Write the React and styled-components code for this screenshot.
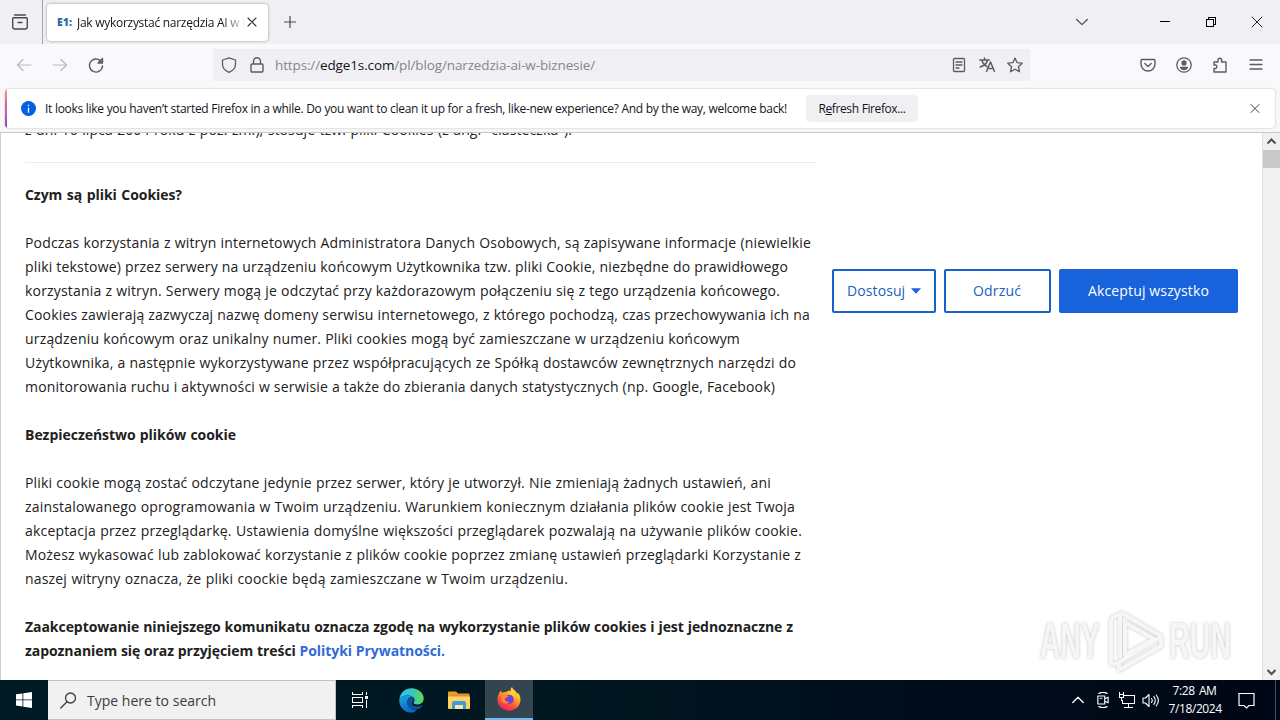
import React from 'react';
import styled, { createGlobalStyle } from 'styled-components';

const Global = createGlobalStyle`
  * { box-sizing: border-box; }
  body { margin: 0; overflow: hidden; font-family: "Open Sans", "Noto Sans", sans-serif; }
  svg { display: block; flex: none; }
`;

const Screen = styled.div`
  width: 1280px; height: 720px; display: flex; flex-direction: column;
  background: #fff; overflow: hidden;
`;

/* A single line of text set to an exact measure */
const Line = styled.div`
  width: ${p => p.$w}px; flex: none; white-space: nowrap;
  text-align: justify; text-align-last: justify;
  font-size: ${p => p.$size || 12}px; letter-spacing: ${p => p.$ls || 0}px;
  font-weight: ${p => p.$weight || 400};
  color: ${p => p.$color || 'inherit'};
  line-height: ${p => p.$lh || 20}px;
`;
const Gap = styled.div`flex: ${p => (p.$w ? `0 0 ${p.$w}px` : '1')};`;

const TabBar = styled.header`
  height: 44px; flex: none; display: flex; align-items: center; background: #f0f0f4; color: #4a4a52;
`;
const FirefoxView = styled.div`
  width: 43px; height: 44px; padding-left: 12px; display: flex; align-items: center;
  border-right: 1px solid #a5a5ab;
`;
const Tab = styled.div`
  width: 221px; height: 37px; margin-left: 4px; border-radius: 4px; background: #fff;
  box-shadow: 0 0 3px rgba(0,0,0,.38); padding-left: 10px; display: flex; align-items: center;
`;
const Favicon = styled.span`
  width: 20px; font: 800 10.5px/12px "Open Sans", sans-serif; color: #2b6aa8; letter-spacing: 0;
`;
const TabTitle = styled.div`
  width: 167px; overflow: hidden; color: #15141a; padding-top: 2px;
  mask-image: linear-gradient(90deg, #000 145px, transparent 168px);
`;

const NavBar = styled.div`
  height: 44px; flex: none; display: flex; align-items: center; background: #f9f9fb; color: #5b5b66;
  padding: 0 16px 3px;
`;
const UrlBar = styled.div`
  width: 817px; height: 32px; background: #f0f0f4; display: flex; align-items: center; padding: 0 7px 0 8px;
  b { color: #15141a; font-weight: 400; }
`;

const NoticeArea = styled.div`
  height: 45px; flex: none; background: #f7f7f8; padding: 1px 5px 5px 5px; border-bottom: 1px solid #c8c8ca;
`;
const Notice = styled.div`
  height: 39px; background: #fff; border-radius: 4px; display: flex; align-items: center;
  box-shadow: 0 0 2px rgba(0,0,0,.28); overflow: hidden; color: #15141a; padding-right: 15px;
`;
const Stripe = styled.div`
  width: 2px; height: 39px; background: linear-gradient(#ffa266, #e45fa0 35%, #b45fc0 65%, #7542c5);
`;
const RefreshButton = styled.div`
  width: 112px; height: 27px; border-radius: 4px; background: #f0f0f2; margin-left: 19px;
  display: flex; align-items: center; justify-content: center;
`;

const Viewport = styled.main`
  height: 547px; flex: none; display: flex; overflow: hidden; border-left: 1px solid #cfcfd0; background: #fff;
`;
const Article = styled.div`
  width: 791px; margin: -15px 0 0 24px; flex: none; color: #212121;
`;
const Rule = styled.hr`
  border: 0; height: 1px; background: #ececec; margin: 20px 0;
`;
const Spacer = styled.div`height: 24px;`;
const PolicyLink = styled.span`color: #2f6bd8;`;
const Actions = styled.div`
  display: flex; gap: 8px; margin: 136px 0 0 16px; height: 44px; flex: none;
`;
const ActionButton = styled.div`
  width: ${p => p.$w}px; height: 44px; border: 2px solid ${p => (p.$primary ? '#1863dc' : '#1863c8')}; border-radius: 2px;
  background: ${p => (p.$primary ? '#1863dc' : '#fff')}; color: ${p => (p.$primary ? '#fff' : '#2060bf')};
  display: flex; align-items: center; justify-content: center; gap: 6px;
`;
const Scrollbar = styled.div`
  width: 18px; background: #f0f0f0; display: flex; flex-direction: column; align-items: center;
  border-left: 1px solid #e0e0e0; padding: 4px 0;
`;
const Thumb = styled.div`width: 17px; height: 18px; background: #c9c9c9; margin-top: 4px;`;

const Taskbar = styled.footer`
  height: 40px; flex: none; display: flex; align-items: center; color: #fff;
  background: linear-gradient(90deg, #001a24 0, #001720 42%, #000d1b 70%, #000716 100%);
`;
const TaskButton = styled.div`
  width: ${p => p.$w || 48}px; height: 40px; display: flex; align-items: center; justify-content: center;
  background: ${p => (p.$active ? '#33454e' : 'transparent')};
  border-bottom: ${p => (p.$active ? '2px solid #76b9ed' : '0')};
`;
const Search = styled.div`
  width: 288px; height: 40px; background: #f1f1f1; border: 1px solid #c3c3c3; border-left: 0;
  display: flex; align-items: center; padding: 1px 0 0 12px; color: #3c3c3c;
`;
const Clock = styled.div`
  width: 53px; margin-left: 9px; display: flex; flex-direction: column; align-items: center;
`;
const ShowDesktop = styled.div`width: 5px; height: 40px; border-left: 1px solid #46505c;`;

const Watermark = styled.div`
  position: absolute; left: 1038px; top: 608px; width: 194px; height: 66px;
  display: flex; align-items: center; justify-content: space-between;
  filter: drop-shadow(0 0 1.5px rgba(0,0,0,.24));
`;
const Wordmark = styled.span`
  width: ${p => p.$w}px; height: 44px; display: flex; justify-content: center; align-items: center;
  font: 700 50px/44px "Liberation Sans", sans-serif; color: #f6f6f6;
  > i { font-style: normal; transform: scaleX(${p => p.$sx}); }
`;

const Icon = ({ s = 16, vb = 16, w = 1.3, children, ...rest }) => (
  <svg width={s} height={s} viewBox={`0 0 ${vb} ${vb}`} fill="none" stroke="currentColor"
    strokeWidth={w} strokeLinecap="round" strokeLinejoin="round" {...rest}>{children}</svg>
);

const intro = [
  ['Podczas korzystania z witryn internetowych Administratora Danych Osobowych, są zapisywane informacje (niewielkie', 786],
  ['pliki tekstowe) przez serwery na urządzeniu końcowym Użytkownika tzw. pliki Cookie, niezbędne do prawidłowego', 763],
  ['korzystania z witryn. Serwery mogą je odczytać przy każdorazowym połączeniu się z tego urządzenia końcowego.', 755],
  ['Cookies zawierają zazwyczaj nazwę domeny serwisu internetowego, z którego pochodzą, czas przechowywania ich na', 785],
  ['urządzeniu końcowym oraz unikalny numer. Pliki cookies mogą być zamieszczane w urządzeniu końcowym', 715],
  ['Użytkownika, a następnie wykorzystywane przez współpracujących ze Spółką dostawców zewnętrznych narzędzi do', 771],
  ['monitorowania ruchu i aktywności w serwisie a także do zbierania danych statystycznych (np. Google, Facebook)', 750],
];
const safety = [
  ['Pliki cookie mogą zostać odczytane jedynie przez serwer, który je utworzył. Nie zmieniają żadnych ustawień, ani', 746],
  ['zainstalowanego oprogramowania w Twoim urządzeniu. Warunkiem koniecznym działania plików cookie jest Twoja', 770],
  ['akceptacja przez przeglądarkę. Ustawienia domyślne większości przeglądarek pozwalają na używanie plików cookie.', 777],
  ['Możesz wykasować lub zablokować korzystanie z plików cookie poprzez zmianę ustawień przeglądarki Korzystanie z', 776],
  ['naszej witryny oznacza, że pliki coockie będą zamieszczane w Twoim urządzeniu.', 543],
];
const Body = ({ rows }) => rows.map(([t, w]) => <Line key={t} $w={w} $size={14} $ls={0.18} $lh={24}>{t}</Line>);
const Bold = ({ w, ls = -0.03, children }) => <Line $w={w} $size={14} $ls={ls} $lh={24} $weight={700}>{children}</Line>;

export default function App() {
  return (
    <Screen>
      <Global />
      <TabBar>
        <FirefoxView>
          <Icon s={16} w={1.4}><path d="M2.5 1h11M1.500 3.800h13a1 1 0 0 1 .8 1V13a2 2 0 0 1-2 2H2.700a2 2 0 0 1-2-2V4.800a1 1 0 0 1 .8-1zM6 8.500h4" /></Icon>
        </FirefoxView>
        <Tab>
          <Favicon>E1:</Favicon>
          <TabTitle><Line $w={166} $size={12} $ls={-0.28}>Jak wykorzystać narzędzia AI w b</Line></TabTitle>
          <Gap $w={3} />
          <Icon s={10} vb={10} w={1.1} color="#333"><path d="M1 1l8 8M9 1L1 9" /></Icon>
        </Tab>
        <Gap $w={16} />
        <Icon s={12} vb={12} w={1.2}><path d="M6 .5v11M.5 6h11" /></Icon>
        <Gap />
        <Icon s={12} vb={12} w={1.2}><path d="M.7 3.500L6 8.600l5.300-5.100" /></Icon>
        <Gap $w={71} />
        <Icon s={12} vb={12} w={1} color="#000" shapeRendering="crispEdges"><path d="M1 5.500h10" /></Icon>
        <Gap $w={34} />
        <Icon s={12} vb={12} w={1} color="#000" shapeRendering="crispEdges"><path d="M1.500 3.500h7v7h-7zM3.500 3.500v-2h7v7h-2" /></Icon>
        <Gap $w={34} />
        <Icon s={12} vb={12} w={1} color="#222"><path d="M1 1l10 10M11 1L1 11" /></Icon>
        <Gap $w={17} />
      </TabBar>

      <NavBar>
        <Icon color="#b8b8bf" w={1.2}><path d="M15 8H1.500M7 2.500L1.500 8 7 13.500" /></Icon>
        <Gap $w={20} />
        <Icon color="#b8b8bf" w={1.2}><path d="M1 8h13.500M9 2.500L14.500 8 9 13.500" /></Icon>
        <Gap $w={20} />
        <Icon w={1.4}><path d="M14 6A6.500 6.500 0 1 0 14.500 9M14.500 1.500V6H10z" /></Icon>
        <Gap $w={109} />
        <UrlBar>
          <Icon w={1.3}><path d="M8 .8L14.500 3v4.200c0 3.600-2.500 6.500-6.500 8.100-4-1.600-6.500-4.500-6.500-8.100V3z" /></Icon>
          <Gap $w={12} />
          <Icon w={1.4}><path d="M3 7h10a1 1 0 0 1 1 1v6a1 1 0 0 1-1 1H3a1 1 0 0 1-1-1V8a1 1 0 0 1 1-1zM4.500 7V4.200a3.500 3.500 0 0 1 7 0V7" /></Icon>
          <Gap $w={10} />
          <Line $w={320} $size={13.5} $ls={-0.13} $color="#85858c">https://<b>edge1s.com</b>/pl/blog/narzedzia-ai-w-biznesie/</Line>
          <Gap />
          <Icon w={1.3}><path d="M3.500 1.500h9a1 1 0 0 1 1 1v11a1 1 0 0 1-1 1h-9a1 1 0 0 1-1-1v-11a1 1 0 0 1 1-1zM5 5h6M5 8h6M5 11h3" /></Icon>
          <Gap $w={12} />
          <Icon w={1.5}><path d="M.8 3h9.400M5.500 1v2M8.500 3C7.800 6.500 4.500 9 1.200 10M2.800 3c.6 3 2.600 5 5 6.500M7.500 14.500L11.500 5l4 9.500M9 11.500h5" /></Icon>
          <Gap $w={12} />
          <Icon w={1.3}><path d="M8 1l2.100 4.700 5.100.5-3.800 3.500 1.100 5.100L8 12.200l-4.500 2.600 1.100-5.100L.8 6.200l5.100-.5z" /></Icon>
        </UrlBar>
        <Gap />
        <Icon w={1.4}><path d="M2 2.500h12a1 1 0 0 1 1 1V7A7 7 0 0 1 1 7V3.500a1 1 0 0 1 1-1zM4.800 6.500L8 9.500l3.200-3" /></Icon>
        <Gap $w={20} />
        <Icon w={1.3}><circle cx="8" cy="8" r="7.200" /><circle cx="8" cy="6" r="2" fill="currentColor" /><path d="M4.500 10.500h7c-.5 1.300-1.900 2-3.500 2s-3-.7-3.500-2z" fill="currentColor" /></Icon>
        <Gap $w={20} />
        <Icon w={1.4}><path d="M2 5h4V3a1.800 1.800 0 0 1 3.600 0v2H14v10H2v-3.500h1.500a1.800 1.800 0 0 0 0-3.500H2z" /></Icon>
        <Gap $w={20} />
        <Icon w={1.3}><path d="M2 3h12M2 7.500h12M2 12h12" /></Icon>
      </NavBar>

      <NoticeArea>
        <Notice>
          <Stripe />
          <Gap $w={14} />
          <svg width="16" height="16" viewBox="0 0 16 16"><circle cx="7.500" cy="7.500" r="7.500" fill="#0560df" /><path d="M7.500 6.700v5M7.500 3.700v1.500" stroke="#fff" strokeWidth="1.300" /></svg>
          <Gap $w={8} />
          <Line $w={742} $size={12} $ls={-0.29}>It looks like you haven’t started Firefox in a while. Do you want to clean it up for a fresh, like-new experience? And by the way, welcome back!</Line>
          <RefreshButton><Line $w={87} $size={12} $ls={-0.4}>R<u>e</u>fresh Firefox...</Line></RefreshButton>
          <Gap />
          <Icon s={10} vb={10} w={1} color="#444"><path d="M1 .5l8 8M9 .5l-8 8" /></Icon>
        </Notice>
      </NoticeArea>

      <Viewport>
        <Article>
          <Line $w={547} $size={14} $ls={0.1} $lh={24}>z dn. 16 lipca 2004 roku z póź. zm.), stosuje tzw. pliki Cookies (z ang. "ciasteczka").</Line>
          <Rule />
          <Bold w={157} ls={-0.05}>Czym są pliki Cookies?</Bold>
          <Spacer />
          <Body rows={intro} />
          <Spacer />
          <Bold w={211}>Bezpieczeństwo plików cookie</Bold>
          <Spacer />
          <Body rows={safety} />
          <Spacer />
          <Bold w={768} ls={-0.05}>Zaakceptowanie niniejszego komunikatu oznacza zgodę na wykorzystanie plików cookies i jest jednoznaczne z</Bold>
          <Bold w={420} ls={-0.06}>zapoznaniem się oraz przyjęciem treści <PolicyLink>Polityki Prywatności.</PolicyLink></Bold>
        </Article>
        <Actions>
          <ActionButton $w={104}>
            <Line $w={58} $size={14} $ls={0.1}>Dostosuj</Line>
            <svg width="10" height="6" viewBox="0 0 11 6"><path d="M0 0h11L5.500 6z" fill="#1863dc" /></svg>
          </ActionButton>
          <ActionButton $w={107}><Line $w={49} $size={14} $ls={0.2}>Odrzuć</Line></ActionButton>
          <ActionButton $w={179} $primary><Line $w={121} $size={14} $ls={0.14}>Akceptuj wszystko</Line></ActionButton>
        </Actions>
        <Gap />
        <Scrollbar>
          <Icon s={9} vb={9} w={2} color="#505050" strokeLinecap="butt" strokeLinejoin="miter"><path d="M.5 6.500l4-4 4 4" /></Icon>
          <Thumb />
          <Gap />
          <Icon s={9} vb={9} w={2} color="#505050" strokeLinecap="butt" strokeLinejoin="miter"><path d="M.5 3l4 4 4-4" /></Icon>
        </Scrollbar>
      </Viewport>

      <Taskbar>
        <TaskButton>
          <svg width="16" height="16" viewBox="0 0 16 16" fill="#fff"><path d="M0 2.300l6.500-.9v6.100H0zM7.300 1.300L16 0v7.500H7.300zM0 8.300h6.500v6.200L0 13.600zM7.300 8.300H16V16l-8.700-1.200z" /></svg>
        </TaskButton>
        <Search>
          <Icon s={17} vb={17} w={1.3}><circle cx="10.500" cy="6" r="5" /><path d="M7 9.800L.8 16" /></Icon>
          <Gap $w={10} />
          <Line $w={129} $size={14} $ls={-0.02}>Type here to search</Line>
        </Search>
        <TaskButton>
          <svg width="17" height="16" viewBox="0 0 17 16" fill="none" stroke="#fff" shapeRendering="crispEdges"><path d="M.5 0v2.500h10V0M.5 5.500h10v5H.5zM.5 16v-2.500h10V16M14.500 0v3M14.500 8v8" /><path d="M13 4h3v3h-3z" fill="#fff" stroke="none" /></svg>
        </TaskButton>
        <TaskButton $w={54}>
          <svg width="25" height="25" viewBox="0 0 24 24">
            <defs>
              <linearGradient id="ea" x1="0" x2="1"><stop stopColor="#2fc1ee" /><stop offset=".55" stopColor="#35c7bd" /><stop offset="1" stopColor="#66d84e" /></linearGradient>
              <linearGradient id="eb" x1="0" y1="0" x2=".5" y2="1"><stop stopColor="#1ba7e6" /><stop offset="1" stopColor="#0868c0" /></linearGradient>
            </defs>
            <path d="M.3 11C1 4.500 6 .3 12 .3c7 0 11.700 4.900 11.700 9.700 0 3.500-2.700 5.800-6 5.800-2.700 0-3.900-1-3.700-1.700.2-.6.900-1 .9-2.500 0-2-2.400-4.400-6.400-4.400C4.500 7.200 1.300 8.800.3 11z" fill="url(#ea)" />
            <path d="M.3 11c1-2.200 4.200-3.800 8.200-3.800 1.500 0 2.800.4 3.900 1C9.500 8.800 8 11.300 8 14c0 4.500 4.500 7.500 9 7.200-1.400 1.500-3.500 2.500-5.500 2.500C5 23.700-.3 18 .3 11z" fill="url(#eb)" />
            <path d="M12.300 8.300C9.500 8.800 8 11.300 8 14c0 5 5 8 10 6.500 1.700-.7 3.200-1.900 4.200-3.200.3-.5-.1-.8-.6-.6-6 2.800-10.800-.8-8.700-3 1.400-1.500 1.500-3.400-.6-5.400z" fill="#124f9c" />
          </svg>
        </TaskButton>
        <TaskButton $w={42}>
          <svg width="22" height="19" viewBox="0 0 22 19">
            <path d="M0 1.500Q0 .5 1 .5h7l2 2h10.500q1 0 1 1V8H0z" fill="#e8a317" />
            <path d="M3 3h17v3H3z" fill="#e98c3a" />
            <path d="M0 5.500h22V17q0 1-1 1H1q-1 0-1-1z" fill="#fcd462" />
            <path d="M4 18v-6q0-2 2-2h10q2 0 2 2v6h-3v-4H7v4z" fill="#3f9bd8" /><path d="M7 14h8v4H7z" fill="#fbe6a1" />
          </svg>
        </TaskButton>
        <Gap $w={5} />
        <TaskButton $active>
          <svg width="24" height="24" viewBox="0 0 24 24">
            <defs>
              <linearGradient id="fa" x1=".8" y1="0" x2=".25" y2="1"><stop stopColor="#fff044" /><stop offset=".35" stopColor="#ffb42a" /><stop offset=".65" stopColor="#ff5a36" /><stop offset="1" stopColor="#ec1670" /></linearGradient>
            </defs>
            <path d="M4 3.500c.2 1.200.8 2 1.600 2.300C6.600 5 8 4.800 9 5.200 10 3.800 12 3.200 14 4c-.6-1.300-.5-2.700 1-4 .6 2.200 2.500 3 4 4.800.6.7.8 1.300 1 2 .5-.3.600-.8.600-1.300C22.500 7.300 23.500 9.800 23.500 12.500 23.500 19 18.500 23.700 12 23.700S.5 19 .5 12.500C.5 9 1.700 6 4 3.500z" fill="url(#fa)" />
            <circle cx="12.200" cy="12.300" r="4.600" fill="#7541d8" />
            <path d="M4.500 7.500C7 7 9 7.200 11.500 9.500c-1 1.400-3.500 1-3.800 2.600-.1 2 2 3 4.800 2.700-1.400 2-5 2.400-7 .2-1.600-1.800-2-4.500-1-7.500z" fill="#ff8a24" />
            <path d="M13 4.500c3 1 5.500 4 5 8-.2-2.200-1.500-4-3.500-4.500-1.200-.6-1.800-2-1.500-3.500z" fill="#ffd338" />
          </svg>
        </TaskButton>
        <Gap />
        <Icon s={12} vb={12} w={1.3}><path d="M.8 8.500L6 3.300l5.200 5.200" /></Icon>
        <Gap $w={11} />
        <Icon s={16} vb={14} w={1}><path d="M2.500 3.500h6v7h-6zM8.500 6l3-1.500v5l-3-1.500M3.500 1.200Q7-.6 10.500 1.200M3.500 12.800Q7 14.600 10.500 12.800M4.500 5.500h1.500" /></Icon>
        <Gap $w={7} />
        <Icon s={17} vb={17} w={1.1} shapeRendering="crispEdges" strokeLinejoin="miter"><path d="M6.500 3.500h10v8h-12v-3M10.500 12v3M6.500 15.500h8M1.500 2.500h4v3h-4zM3.500 5.500v3M1.500 1v1M5.500 1v1" /></Icon>
        <Gap $w={7} />
        <Icon s={17} vb={17} w={1.1}><path d="M1 6h2.500L7 2.500v12L3.500 11H1zM9.500 6.500q1.500 2 0 4M11.800 4.700q3 3.800 0 7.600M14.200 3q4.300 5.500 0 11" /></Icon>
        <Clock>
          <Line $w={44} $size={12} $lh={18} $ls={-0.4}>7:28 AM</Line>
          <Line $w={52} $size={12} $lh={18} $ls={-0.4}>7/18/2024</Line>
        </Clock>
        <Gap $w={17} />
        <Icon s={17} vb={17} w={1.2} strokeLinejoin="miter"><path d="M1 1.500h15v12h-5L8.500 16 6 13.500H1z" /></Icon>
        <Gap $w={20} />
        <ShowDesktop />
      </Taskbar>

      <Watermark>
        <Wordmark $w={64} $sx={0.57}><i>ANY</i></Wordmark>
        <svg width="58" height="64" viewBox="0 0 58 64" fill="none" stroke="#f6f6f6" strokeWidth="4" strokeLinejoin="round">
          <path d="M14 3L55 27M14 3v46M19 13v33L48 30 20 14" /><path d="M5 9v46h8M5 9l7-3M13 61l42-24v-9L13 53z" />
        </svg>
        <Wordmark $w={64} $sx={0.57}><i>RUN</i></Wordmark>
      </Watermark>
    </Screen>
  );
}
